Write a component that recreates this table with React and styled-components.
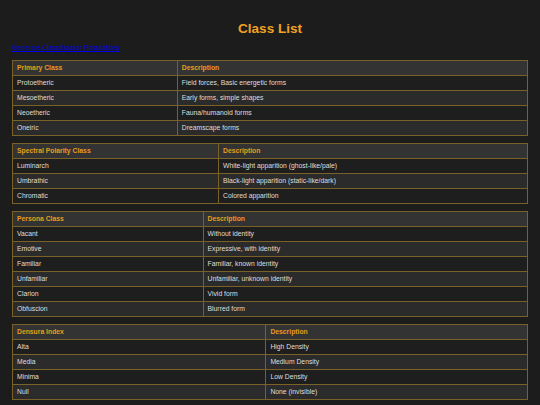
import styled, { createGlobalStyle } from "styled-components";

const GlobalStyle = createGlobalStyle`
  html, body {
    margin: 0;
    background-color: #1c1c1c;
  }
  body {
    font-family: "Liberation Sans", Arial, sans-serif;
    color: #dcdcdc;
  }
`;

const Page = styled.div`
  padding: 13px 12px 0;
`;

const Title = styled.h1`
  margin: 8px 0 8px;
  text-align: center;
  font-size: 13.5px;
  font-weight: bold;
  color: #f0a322;
`;

const GenLink = styled.a`
  display: block;
  font-size: 6.8px;
  color: #0000ee;
  text-decoration: underline;
  margin-bottom: 9px;
`;

const Table = styled.table`
  width: 100%;
  border-collapse: collapse;
  border: 1px solid #7a6128;
  margin-bottom: 7px;
  font-size: 6.8px;
  line-height: 1.1;
`;

const Th = styled.th`
  text-align: left;
  padding: 0 4px;
  height: 14px;
  color: #e59d1c;
  font-weight: bold;
  background-color: #333333;
  border: 1px solid #7a6128;
  width: ${(p) => p.$w || "auto"};
`;

const Td = styled.td`
  padding: 0 4px;
  height: 14px;
  border: 1px solid #7a6128;
  color: #dedede;
`;

const Row = styled.tr`
  height: 15px;
  background-color: ${(p) => (p.$alt ? "#2b2b2b" : "#1e1e1e")};
`;

const HeadRow = styled.tr`
  height: 15px;
`;

const tables = [
  {
    head: "Primary Class",
    w: "32%",
    rows: [
      ["Protoetheric", "Field forces, Basic energetic forms"],
      ["Mesoetheric", "Early forms, simple shapes"],
      ["Neoetheric", "Fauna/humanoid forms"],
      ["Oneiric", "Dreamscape forms"],
    ],
  },
  {
    head: "Spectral Polarity Class",
    w: "40%",
    rows: [
      ["Luminarch", "White-light apparition (ghost-like/pale)"],
      ["Umbrathic", "Black-light apparition (static-like/dark)"],
      ["Chromatic", "Colored apparition"],
    ],
  },
  {
    head: "Persona Class",
    w: "37%",
    rows: [
      ["Vacant", "Without identity"],
      ["Emotive", "Expressive, with identity"],
      ["Familiar", "Familiar, known identity"],
      ["Unfamiliar", "Unfamiliar, unknown identity"],
      ["Clarion", "Vivid form"],
      ["Obfuscion", "Blurred form"],
    ],
  },
  {
    head: "Densura Index",
    w: "49.2%",
    rows: [
      ["Alta", "High Density"],
      ["Media", "Medium Density"],
      ["Minima", "Low Density"],
      ["Null", "None (invisible)"],
    ],
  },
];

function ClassTable({ table }) {
  return (
    <Table>
      <thead>
        <HeadRow>
          <Th $w={table.w}>{table.head}</Th>
          <Th>Description</Th>
        </HeadRow>
      </thead>
      <tbody>
        {table.rows.map((r, i) => (
          <Row key={r[0]} $alt={i % 2 === 1}>
            <Td>{r[0]}</Td>
            <Td>{r[1]}</Td>
          </Row>
        ))}
      </tbody>
    </Table>
  );
}

function App() {
  return (
    <Page>
      <GlobalStyle />
      <Title>Class List</Title>
      <GenLink href="#">Generate Classification Possibilities</GenLink>
      {tables.map((t) => (
        <ClassTable key={t.head} table={t} />
      ))}
    </Page>
  );
}

export default App;
